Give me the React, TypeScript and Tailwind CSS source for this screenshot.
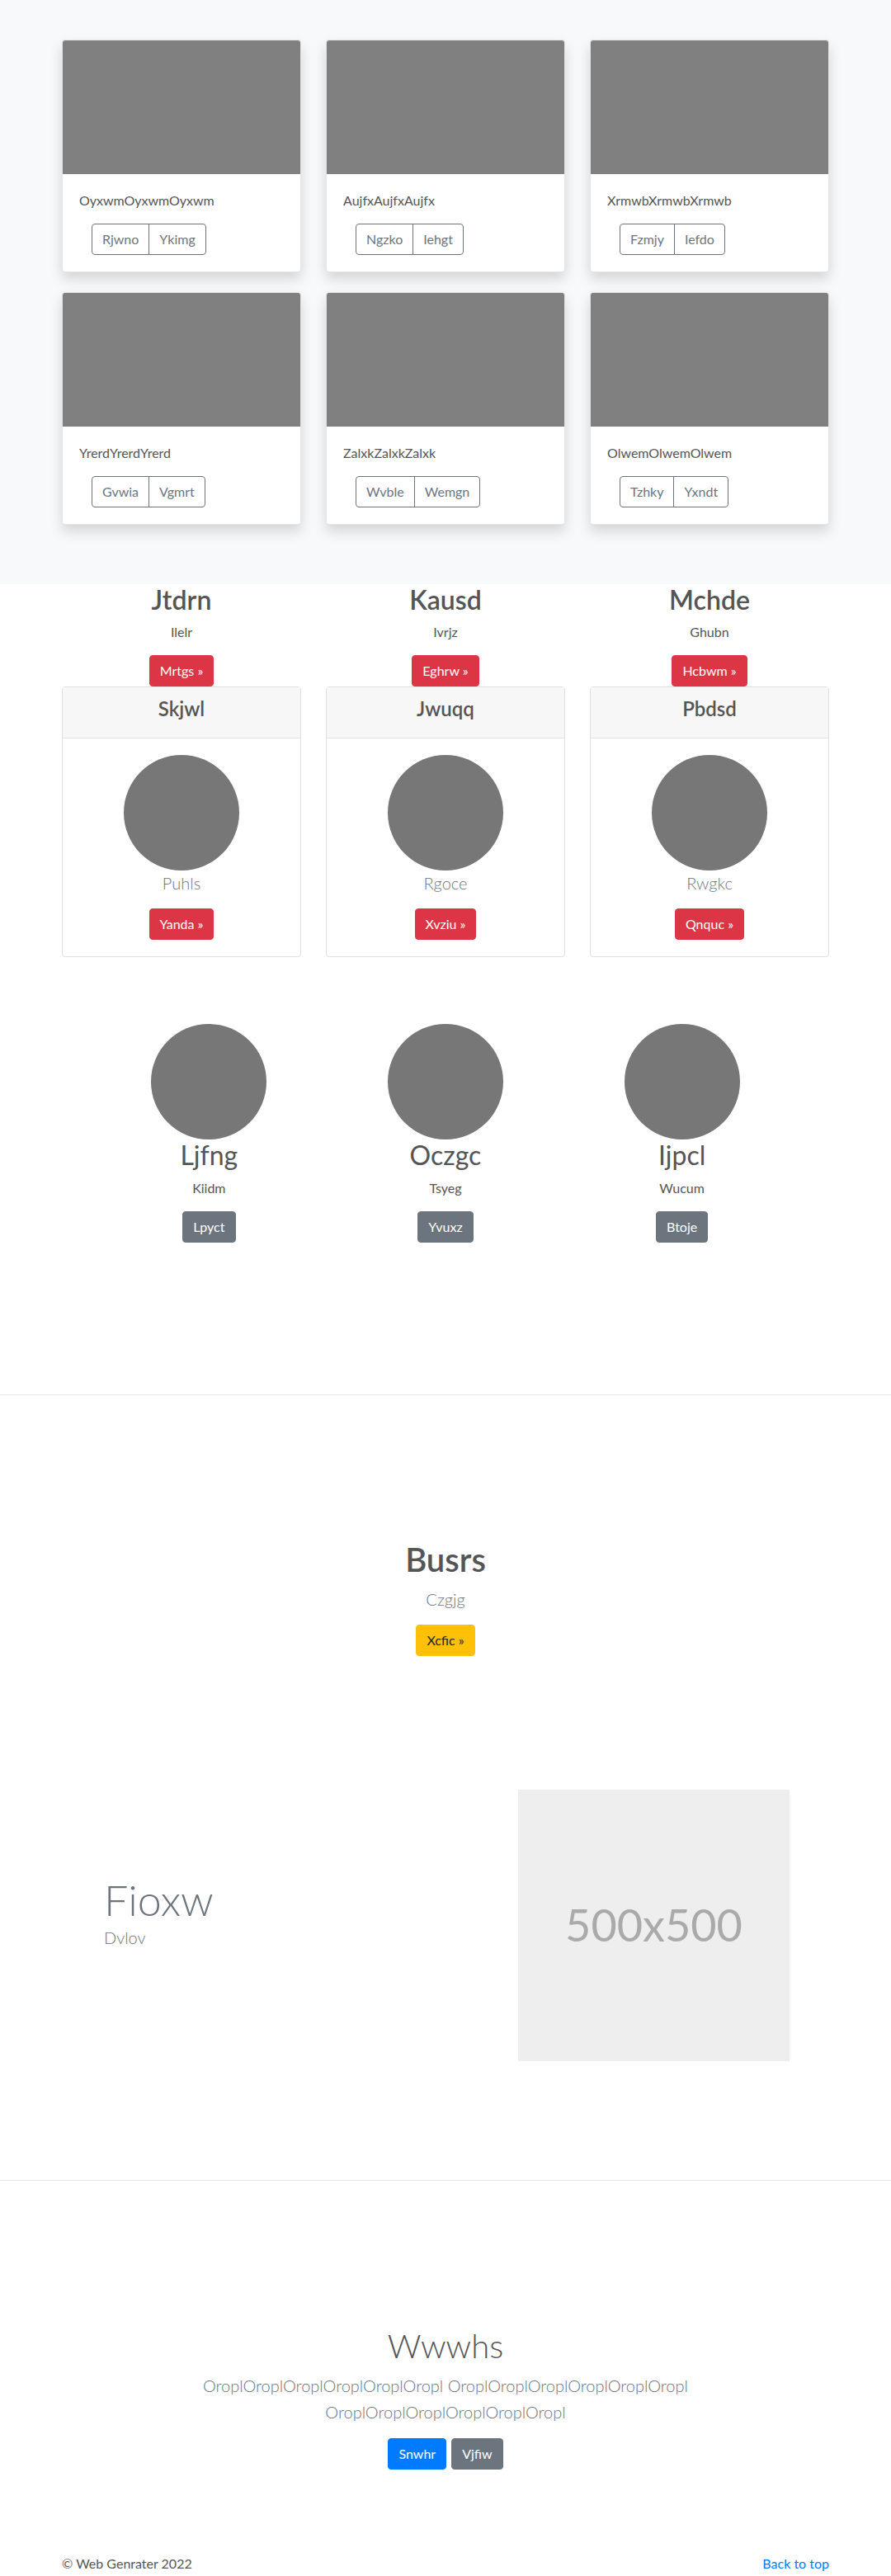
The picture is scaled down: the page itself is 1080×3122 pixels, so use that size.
import React from 'react';

const albumCards = [
  { title: 'OyxwmOyxwmOyxwm', a: 'Rjwno', b: 'Ykimg' },
  { title: 'AujfxAujfxAujfx', a: 'Ngzko', b: 'Iehgt' },
  { title: 'XrmwbXrmwbXrmwb', a: 'Fzmjy', b: 'Iefdo' },
  { title: 'YrerdYrerdYrerd', a: 'Gvwia', b: 'Vgmrt' },
  { title: 'ZalxkZalxkZalxk', a: 'Wvble', b: 'Wemgn' },
  { title: 'OlwemOlwemOlwem', a: 'Tzhky', b: 'Yxndt' },
];

const features = [
  { title: 'Jtdrn', text: 'Ilelr', action: 'Mrtgs' },
  { title: 'Kausd', text: 'Ivrjz', action: 'Eghrw' },
  { title: 'Mchde', text: 'Ghubn', action: 'Hcbwm' },
];

const plans = [
  { title: 'Skjwl', text: 'Puhls', action: 'Yanda' },
  { title: 'Jwuqq', text: 'Rgoce', action: 'Xvziu' },
  { title: 'Pbdsd', text: 'Rwgkc', action: 'Qnquc' },
];

const people = [
  { name: 'Ljfng', role: 'Kiidm', action: 'Lpyct' },
  { name: 'Oczgc', role: 'Tsyeg', action: 'Yvuxz' },
  { name: 'Ijpcl', role: 'Wucum', action: 'Btoje' },
];

const btn = 'inline-block rounded-[4px] border px-3 py-[6px] text-base leading-6';

function AlbumCard({ title, a, b }: { title: string; a: string; b: string }) {
  return (
    <div className="px-[15px] pb-6">
      <div className="overflow-hidden rounded-[4px] border border-black/10 bg-white shadow-[0_8px_16px_rgba(0,0,0,0.15)]">
        <div className="h-[162px] bg-[#808080]" />
        <div className="p-5">
          <p className="mb-4 text-base leading-6">{title}</p>
          <div className="ml-[15px] inline-flex">
            <span className="rounded-l-[4px] border border-[#6c757d] px-3 py-[6px] text-base leading-6 text-[#6c757d]">{a}</span>
            <span className="-ml-px rounded-r-[4px] border border-[#6c757d] px-3 py-[6px] text-base leading-6 text-[#6c757d]">{b}</span>
          </div>
        </div>
      </div>
    </div>
  );
}

function Divider() {
  return <div className="h-px bg-[#e5e5e5]" />;
}

export default function App() {
  return (
    <div className="bg-white font-['Lato',sans-serif] text-[#555]">
      {/* album */}
      <section className="bg-[#f8f9fa] pb-12 pt-12">
        <div className="mx-auto grid w-[960px] grid-cols-3">
          {albumCards.map((c) => (
            <AlbumCard key={c.title} {...c} />
          ))}
        </div>
      </section>

      {/* features + pricing */}
      <section>
        <div className="mx-auto grid w-[960px] grid-cols-3">
          {features.map((f) => (
            <div key={f.title} className="px-[15px] text-center">
              <h2 className="mb-2 text-[32px] font-semibold leading-[1.2]">{f.title}</h2>
              <p className="mb-4 text-base leading-6">{f.text}</p>
              <span className={`${btn} border-[#dc3545] bg-[#dc3545] text-white`}>{f.action} &raquo;</span>
            </div>
          ))}
          {plans.map((p) => (
            <div key={p.title} className="px-[15px] text-center">
              <div className="rounded-[4px] border border-[#dfdfdf]">
                <div className="border-b border-[#dfdfdf] bg-[#f7f7f7] px-5 pb-3 pt-3">
                  <h4 className="mb-2 text-2xl font-semibold leading-[1.2]">{p.title}</h4>
                </div>
                <div className="flex flex-col items-center p-5">
                  <div className="h-[140px] w-[140px] rounded-full bg-[#777]" />
                  <p className="mb-4 text-xl font-light leading-[30px] text-[#6c757d]">{p.text}</p>
                  <span className={`${btn} border-[#dc3545] bg-[#dc3545] text-white`}>{p.action} &raquo;</span>
                </div>
              </div>
            </div>
          ))}
        </div>
      </section>

      {/* team */}
      <section className="pb-[184px] pt-[81px]">
        <div className="mx-auto grid w-[860px] grid-cols-3">
          {people.map((m) => (
            <div key={m.name} className="flex flex-col items-center text-center">
              <div className="h-[140px] w-[140px] rounded-full bg-[#777]" />
              <h2 className="mb-2 text-[32px] font-normal leading-[1.2]">{m.name}</h2>
              <p className="mb-4 text-base leading-6">{m.role}</p>
              <span className={`${btn} border-[#6c757d] bg-[#6c757d] text-white`}>{m.action}</span>
            </div>
          ))}
        </div>
      </section>

      <Divider />

      {/* call out */}
      <section className="pt-[175px] text-center">
        <h1 className="mb-[9px] text-[40px] font-semibold leading-[1.2]">Busrs</h1>
        <p className="mb-4 text-xl font-light leading-[30px] text-[#6c757d]">Czgjg</p>
        <span className={`${btn} border-[#ffc107] bg-[#ffc107] text-[#212529]`}>Xcfic &raquo;</span>
      </section>

      {/* featurette */}
      <section className="pb-[144px] pt-[162px]">
        <div className="mx-auto flex w-[960px] items-center">
          <div className="flex-1 pb-[32px] pl-[66px]">
            <h2 className="text-[52px] font-light leading-[1.2] text-[#6c757d]">Fioxw</h2>
            <p className="text-xl font-light leading-[30px] text-[#6c757d]">Dvlov</p>
          </div>
          <div className="mr-[63px] flex h-[329px] w-[329px] items-center justify-center bg-[#eeeeee]">
            <span className="text-[54px] leading-none text-[#aaaaaa]">500x500</span>
          </div>
        </div>
      </section>

      <Divider />

      {/* jumbotron */}
      <section className="pt-[176px] text-center">
        <h1 className="mb-2 text-[40px] font-light leading-[1.2]">Wwwhs</h1>
        <p className="mx-auto mb-4 max-w-[680px] text-xl font-light leading-[32px] text-[#6c757d]">
          OroplOroplOroplOroplOroplOropl OroplOroplOroplOroplOroplOropl OroplOroplOroplOroplOroplOropl
        </p>
        <div className="my-2 flex justify-center gap-[6px]">
          <span className={`${btn} border-[#007bff] bg-[#007bff] text-white`}>Snwhr</span>
          <span className={`${btn} border-[#6c757d] bg-[#6c757d] text-white`}>Vjfiw</span>
        </div>
      </section>

      {/* footer */}
      <footer className="pt-[94px]">
        <div className="mx-auto flex w-[960px] justify-between px-[15px] text-base leading-6">
          <p>&copy; Web Genrater 2022</p>
          <a href="#" className="text-[#007bff]">Back to top</a>
        </div>
      </footer>
    </div>
  );
}
